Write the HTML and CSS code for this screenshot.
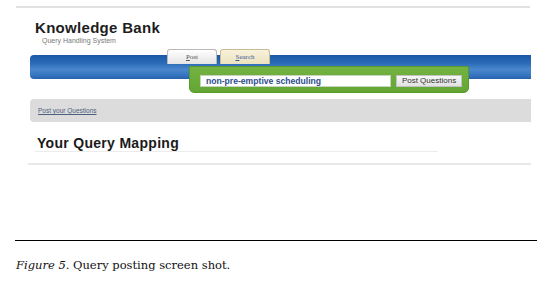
FILE: index.html
```html
<!DOCTYPE html>
<html>
<head>
<meta charset="utf-8">
<link rel="stylesheet" href="styles.css">
</head>
<body>
<div class="shot">
  <div class="topline"></div>
  <div class="brand">
    <div class="logo">Knowledge Bank</div>
    <div class="tagline">Query Handling System</div>
  </div>
  <div class="nav">
    <div class="tabs">
      <span class="tab tab-post"><u>P</u>ost</span>
      <span class="tab tab-search"><u>S</u>earch</span>
    </div>
    <div class="bar"></div>
    <div class="panel">
      <div class="field">non-pre-emptive scheduling</div>
      <div class="btn">Post Questions</div>
    </div>
  </div>
  <div class="crumb"><a class="crumb-link">Post your Questions</a></div>
  <h2 class="mapping">Your Query Mapping</h2>
  <div class="sep"></div>
</div>
<div class="figure-rule"></div>
<p class="caption"><em>Figure 5</em>. Query posting screen shot.</p>
</body>
</html>
```
FILE: styles.css
```css
html, body {
  margin: 0;
  padding: 0;
  background: #ffffff;
}
body {
  width: 550px;
  height: 291px;
  overflow: hidden;
  font-family: "Liberation Sans", Arial, sans-serif;
}
.shot {
  display: flex;
  flex-direction: column;
}
.topline {
  margin: 6px 20px 0 16px;
  height: 2px;
  background: #e1e1e1;
}
.brand {
  padding-left: 35px;
  margin-top: 11px;
}
.logo {
  font-weight: bold;
  font-size: 15px;
  letter-spacing: 0.3px;
  line-height: 18px;
  color: #1d1d1d;
}
.tagline {
  font-size: 7px;
  line-height: 8px;
  color: #7a7a7a;
  padding-left: 7px;
}
.nav {
  margin-top: 4px;
  display: flex;
  flex-direction: column;
}
.tabs {
  display: flex;
  gap: 3px;
  margin-left: 167px;
  height: 15px;
  position: relative;
  z-index: 2;
}
.tab {
  width: 48px;
  height: 14px;
  border: 1px solid #b9b9b9;
  border-bottom: none;
  border-radius: 3px 3px 0 0;
  font-family: "Liberation Serif", serif;
  font-size: 7px;
  line-height: 15px;
  text-align: center;
}
.tab-post {
  background: linear-gradient(#ffffff, #e4e4e4);
  color: #555;
}
.tab-search {
  background: linear-gradient(#f8f2dc, #ece2bf);
  border-color: #c8bc95;
  color: #3a5a9a;
}
.bar {
  margin: -9px 19px 0 30px;
  height: 24px;
  border-radius: 4px 0 0 4px;
  background: linear-gradient(180deg, #1a58a6 0%, #2b6cb8 35%, #4a87cc 60%, #3574c0 85%, #2a62ac 100%);
}
.panel {
  margin: -13px 0 0 189px;
  width: 280px;
  height: 27px;
  box-sizing: border-box;
  background: linear-gradient(#74b342, #64a534);
  border: 1px solid #579a2c;
  border-radius: 0 0 5px 5px;
  display: flex;
  align-items: center;
  gap: 5px;
  padding: 2px 0 0 10px;
  position: relative;
  z-index: 1;
}
.field {
  width: 191px;
  height: 12px;
  box-sizing: border-box;
  background: #fff;
  border: 1px solid #c7d3bd;
  font-size: 8.6px;
  font-weight: bold;
  line-height: 10px;
  color: #2c4d8c;
  padding-left: 5px;
}
.btn {
  width: 66px;
  height: 12px;
  box-sizing: border-box;
  background: linear-gradient(#f6f6f6, #e2e2e2);
  border: 1px solid #c2c2c2;
  font-size: 8px;
  line-height: 10px;
  color: #333;
  text-align: center;
}
.crumb {
  margin: 6px 19px 0 30px;
  height: 23px;
  background: #dcdcdc;
  border-radius: 4px 0 0 4px;
  display: flex;
  align-items: center;
  padding-left: 8px;
}
.crumb-link {
  font-size: 6.5px;
  color: #4d5f7f;
  text-decoration: underline;
}
.mapping {
  margin: 13px 0 0 35px;
  width: 403px;
  padding-left: 2px;
  box-sizing: border-box;
  font-size: 14px;
  font-weight: bold;
  line-height: 16px;
  letter-spacing: 0.3px;
  color: #1a1a1a;
  border-bottom: 1px solid #ececec;
}
.sep {
  margin: 11px 19px 0 28px;
  height: 2px;
  background: #e9e9e9;
}
.figure-rule {
  margin: 75px 13px 0 15px;
  height: 1px;
  background: #000;
}
.caption {
  margin: 17px 0 0 16px;
  font-family: "DejaVu Serif", Georgia, serif;
  font-size: 11.5px;
  line-height: 14px;
  color: #111;
}
.caption em {
  font-style: italic;
}
```
